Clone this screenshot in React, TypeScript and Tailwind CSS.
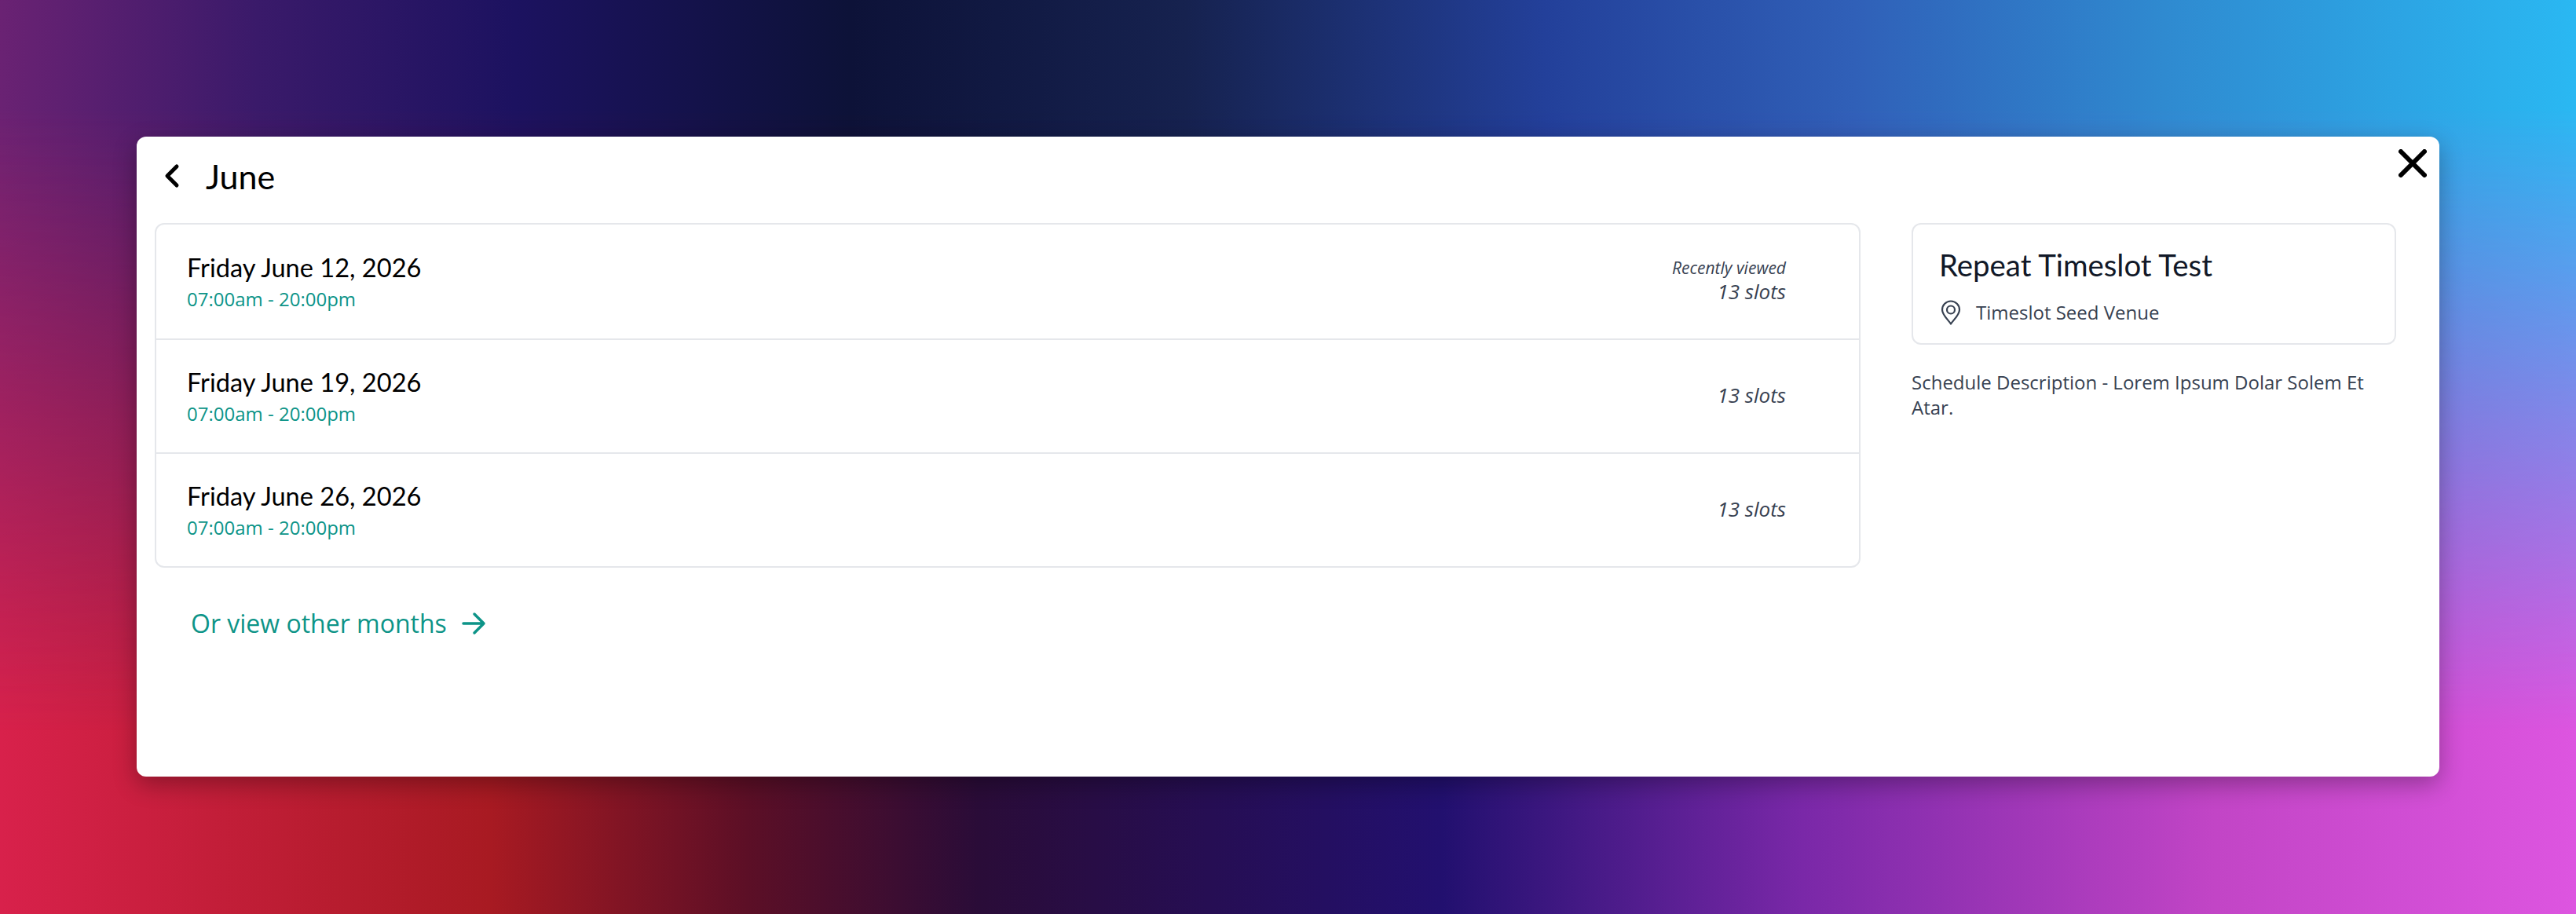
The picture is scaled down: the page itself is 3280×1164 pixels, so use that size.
import React from "react"

const rows = [
  { date: "Friday June 12, 2026", recent: true },
  { date: "Friday June 19, 2026", recent: false },
  { date: "Friday June 26, 2026", recent: false },
]

const heading = "font-['Lato',sans-serif]"
const body = "font-['Open_Sans',sans-serif]"

export default function App() {
  return (
    <div className="relative flex h-[1164px] w-full items-start justify-center overflow-hidden bg-[linear-gradient(to_right,#d8214b_0%,#a81a22_19%,#5c0f26_29%,#2a0c38_38%,#22106f_56%,#7a28a8_70%,#c245c6_86%,#dd55e0_100%)] pt-[174px]">
      {/* top half of the mesh backdrop */}
      <div className="absolute inset-0 bg-[linear-gradient(to_right,#6a2273_0%,#3a1a6a_10%,#1c1260_20%,#0d1238_33%,#16224f_46%,#23409a_60%,#3060b8_72%,#2f8ad0_84%,#2ab8f2_100%)] [mask-image:linear-gradient(to_bottom,black_0%,black_12%,transparent_80%)]" />

      {/* Modal */}
      <div className="relative flex h-[815px] w-[2932px] flex-col rounded-xl bg-white px-[23px] shadow-[0_10px_30px_rgba(0,0,0,0.3)]">
        <button className="absolute right-[16px] top-[16px] text-black" aria-label="Close">
          <svg width="36" height="36" viewBox="0 0 36 36" fill="none" stroke="currentColor" strokeWidth="6" strokeLinecap="round">
            <path d="M3 3l30 30M33 3L3 33" />
          </svg>
        </button>

        {/* Header */}
        <div className="flex h-[110px] items-center pb-[10px] text-black">
          <svg className="ml-[12px]" width="20" height="32" viewBox="0 0 20 32" fill="none" stroke="currentColor" strokeWidth="5" strokeLinecap="round" strokeLinejoin="round">
            <path d="M16 4L4 16l12 12" />
          </svg>
          <span className={`${heading} ml-[33px] text-[43px] leading-none`}>June</span>
        </div>

        <div className="flex items-start">
          {/* Date list */}
          <div className="w-[2172px] shrink-0">
            <div className="rounded-xl border-2 border-[#e5e7eb]">
              {rows.map((row, i) => (
                <div key={row.date} className={`flex h-[145px] items-center justify-between pl-[39px] pr-[93px] ${i > 0 ? "border-t-2 border-[#e5e7eb]" : ""}`}>
                  <div className="pb-[2px]">
                    <div className={`${heading} mb-[2px] text-[32.6px] leading-[44px] text-black`}>{row.date}</div>
                    <div className={`${body} text-[24px] leading-[32px] text-[#0d9488]`}>07:00am - 20:00pm</div>
                  </div>
                  <div className={`${body} pb-[3px] text-right italic text-[#374151]`}>
                    {row.recent && <div className="text-[21px] leading-[27px]">Recently viewed</div>}
                    <div className="text-[26px] leading-[32px]">13 slots</div>
                  </div>
                </div>
              ))}
            </div>
            <a className={`${body} ml-[46px] mt-[49px] flex items-center text-[32px] leading-[44px] text-[#0d9488]`}>
              Or view other months
              <svg className="ml-[18px]" width="32" height="32" viewBox="0 0 32 32" fill="none" stroke="currentColor" strokeWidth="3.5" strokeLinecap="round" strokeLinejoin="round">
                <path d="M3 16h26M17 4l12 12-12 12" />
              </svg>
            </a>
          </div>

          {/* Schedule info */}
          <div className="ml-[65px] w-[617px] shrink-0">
            <div className="h-[155px] rounded-xl border-2 border-[#e5e7eb] pl-[33px] pt-[27px]">
              <div className={`${heading} text-[38.4px] leading-[48px] text-[#111827]`}>Repeat Timeslot Test</div>
              <div className="mt-[21px] flex items-center">
                <svg className="ml-[2px]" width="26" height="32" viewBox="0 0 26 32" fill="none" stroke="#374151" strokeWidth="2.2" strokeLinecap="round" strokeLinejoin="round">
                  <path d="M13 30.5C9 24.5 2 19 2 12.5a11 11 0 0 1 22 0C24 19 17 24.5 13 30.5z" />
                  <circle cx="13" cy="12.5" r="5" />
                </svg>
                <span className={`${body} ml-[19px] text-[24px] leading-[32px] text-[#374151]`}>Timeslot Seed Venue</span>
              </div>
            </div>
            <p className={`${body} mt-[32px] text-[24px] leading-[32px] text-[#374151]`}>
              Schedule Description - Lorem Ipsum Dolar Solem Et Atar.
            </p>
          </div>
        </div>
      </div>
    </div>
  )
}
